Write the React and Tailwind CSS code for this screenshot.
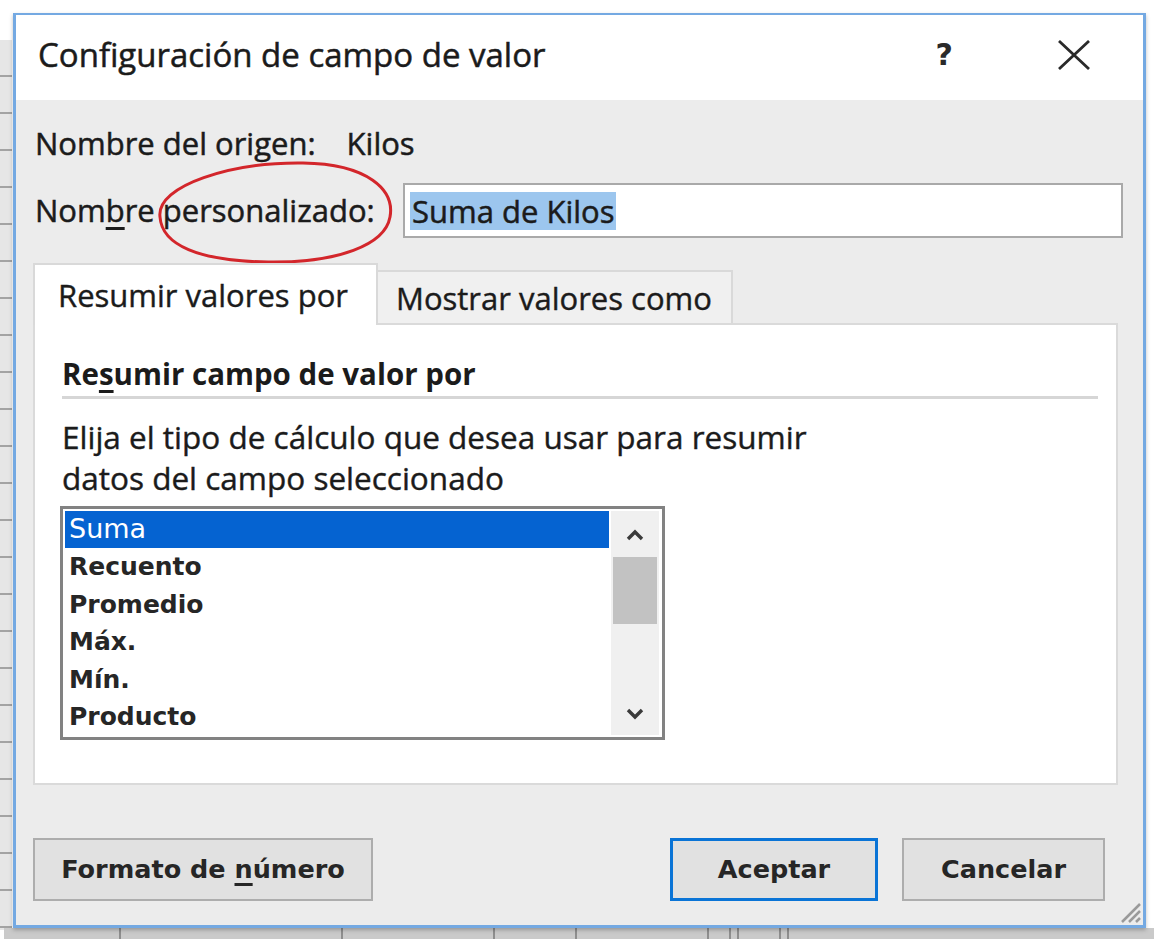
import React from "react";

const items = ["Suma", "Recuento", "Promedio", "Máx.", "Mín.", "Producto"];

const Chevron = ({ up }) => (
    <svg width="18" height="12" viewBox="0 0 18 12">
        <path
            d={up ? "M2 10 L9 3 L16 10" : "M2 2 L9 9 L16 2"}
            fill="none"
            stroke="#3a3a3a"
            strokeWidth="3.4"
        />
    </svg>
);

const App = () => {
    return (
        <div className="relative w-[1157px] h-[947px] bg-white overflow-hidden font-['Open_Sans',sans-serif] text-[#1b1b1b]">
            {/* spreadsheet behind the dialog */}
            <div className="absolute left-0 top-[40px] w-[12px] h-[890px] bg-[#e6e6e6] bg-[repeating-linear-gradient(to_bottom,transparent_0,transparent_35px,#a3a3a3_35px,#a3a3a3_37px)]" />
            <div className="absolute left-[4px] top-[928px] w-[1150px] h-[11px] bg-[#cacaca] flex">
                <div className="ml-[115px] w-[2px] h-full bg-[#8e8e8e]" />
                <div className="ml-[220px] w-[2px] h-full bg-[#8e8e8e]" />
                <div className="ml-[150px] w-[2px] h-full bg-[#8e8e8e]" />
                <div className="ml-[80px] w-[2px] h-full bg-[#8e8e8e]" />
                <div className="ml-[130px] w-[2px] h-full bg-[#8e8e8e]" />
                <div className="ml-[20px] w-[2px] h-full bg-[#8e8e8e]" />
                <div className="ml-[6px] w-[2px] h-full bg-[#8e8e8e]" />
                <div className="ml-[40px] w-[2px] h-full bg-[#8e8e8e]" />
                <div className="ml-[6px] w-[2px] h-full bg-[#8e8e8e]" />
            </div>

            <div className="pt-[13px] pl-[13px]">
                <div className="relative w-[1133px] h-[915px] border-[3px] border-t-2 border-[#74a9e2] bg-[#ececec] flex flex-col shadow-[0_2px_4px_rgba(0,0,0,0.25)]">
                    {/* Title bar */}
                    <div className="h-[85px] bg-white flex items-center pl-[22px] pr-[52px] shrink-0">
                        <span className="text-[33px] leading-none pb-[6px] [-webkit-text-stroke:0.5px_#1b1b1b]">Configuración de campo de valor</span>
                        <span className="ml-auto text-[30px] font-bold leading-none pb-[6px] text-[#2a2a2a] font-['DejaVu_Sans',sans-serif]">?</span>
                        <svg className="ml-[104px] mb-[6px]" width="34" height="30" viewBox="0 0 34 30">
                            <path d="M2 1 L32 29 M32 1 L2 29" stroke="#2a2a2a" strokeWidth="2.8" fill="none" />
                        </svg>
                    </div>

                    {/* Body */}
                    <div className="flex-1 flex flex-col pl-[17px] pr-[20px]">
                        <div className="mt-[23px] h-[40px] flex items-center pl-[2px] text-[31px] [-webkit-text-stroke:0.5px_#1b1b1b]">
                            <span>Nombre del origen:</span>
                            <span className="ml-[31px]">Kilos</span>
                        </div>

                        <div className="mt-[20px] h-[55px] flex items-center [-webkit-text-stroke:0.5px_#1b1b1b]">
                            <div className="w-[370px] pl-[2px] text-[31px] whitespace-nowrap">
                                Nom<span className="underline underline-offset-[5px] decoration-[3px]">b</span>re personalizado:
                            </div>
                            <div className="flex-1 h-[55px] bg-white border-2 border-[#a9a9a9] flex items-center pl-[5px]">
                                <span className="bg-[#9cc6ee] text-[31px] leading-[38px] px-[2px]">Suma de Kilos</span>
                            </div>
                        </div>

                        {/* Tabs */}
                        <div className="mt-[25px] flex items-end h-[62px] [-webkit-text-stroke:0.4px_#1b1b1b]">
                            <div className="w-[345px] h-[62px] bg-white border-2 border-b-0 border-[#d9d9d9] flex items-center pl-[23px] text-[31px] relative z-10">
                                Resumir valores por
                            </div>
                            <div className="w-[355px] h-[55px] bg-[#f0f0f0] border-2 border-b-0 border-l-0 border-[#d9d9d9] flex items-center pl-[18px] text-[31px]">
                                Mostrar valores como
                            </div>
                        </div>

                        <div className="w-[1085px] h-[462px] bg-white border-2 border-[#dadada] -mt-[2px] pl-[27px] pr-[18px] pt-[29px] flex flex-col">
                            <div className="text-[29.5px] font-bold leading-[40px]">
                                Re<span className="underline underline-offset-[5px] decoration-[3px]">s</span>umir campo de valor por
                            </div>
                            <div className="mt-[2px] h-[3px] bg-[#d6d6d6]" />
                            <div className="mt-[17px] text-[31.5px] leading-[41px] [-webkit-text-stroke:0.4px_#1b1b1b]">
                                Elija el tipo de cálculo que desea usar para resumir
                                <br />
                                datos del campo seleccionado
                            </div>

                            {/* List box */}
                            <div className="mt-[8px] -ml-[2px] w-[605px] h-[234px] border-[3px] border-[#828282] bg-white flex p-[2px] pr-[3px]">
                                <div className="w-[547px] flex flex-col font-['DejaVu_Sans',sans-serif] text-[25px] font-bold text-[#262626]">
                                    {items.map((it, i) => (
                                        <div
                                            key={it}
                                            className={
                                                i === 0
                                                    ? "h-[37px] shrink-0 bg-[#0563d1] text-white font-normal text-[27px] flex items-center pl-[4px]"
                                                    : "h-[37.5px] shrink-0 flex items-center pl-[4px]"
                                            }
                                        >
                                            {it}
                                        </div>
                                    ))}
                                </div>
                                <div className="w-[48px] ml-[2px] bg-[#f0f0f0] flex flex-col items-center pt-[18px]">
                                    <Chevron up />
                                    <div className="mt-[16px] w-[44px] h-[67px] bg-[#c2c2c2]" />
                                    <div className="mt-auto mb-[15px]">
                                        <Chevron />
                                    </div>
                                </div>
                            </div>
                        </div>

                        {/* Buttons */}
                        <div className="mt-[53px] h-[63px] flex items-center mr-[18px] font-['DejaVu_Sans',sans-serif] text-[25.5px] font-bold text-[#262626]">
                            <button className="w-[340px] h-[63px] bg-[#e1e1e1] border-2 border-[#adadad] flex items-center justify-center">
                                <span>
                                    Formato de <span className="underline underline-offset-[5px] decoration-[3px]">n</span>úmero
                                </span>
                            </button>
                            <button className="ml-auto w-[208px] h-[63px] bg-[#e1e1e1] border-[3px] border-[#0a74d6] flex items-center justify-center">
                                Aceptar
                            </button>
                            <button className="ml-[24px] w-[203px] h-[63px] bg-[#e1e1e1] border-2 border-[#adadad] flex items-center justify-center">
                                Cancelar
                            </button>
                        </div>
                    </div>

                    {/* resize grip */}
                    <svg className="absolute right-[1px] bottom-[1px]" width="26" height="26" viewBox="0 0 26 26">
                        <path d="M24 6 L6 24 M24 13 L13 24 M24 20 L20 24" stroke="#9a9a9a" strokeWidth="2.5" />
                    </svg>
                </div>
            </div>

            {/* red annotation ellipse */}
            <svg className="absolute left-[148px] top-[155px]" width="252" height="115" viewBox="0 0 252 115">
                <path
                    d="M12 62 C 8 30, 85 7, 155 8 C 220 9, 247 35, 242 62 C 237 90, 190 108, 120 107 C 50 106, 14 90, 12 62 Z"
                    fill="none"
                    stroke="#d3262b"
                    strokeWidth="3"
                />
            </svg>
        </div>
    );
};

export default App;
